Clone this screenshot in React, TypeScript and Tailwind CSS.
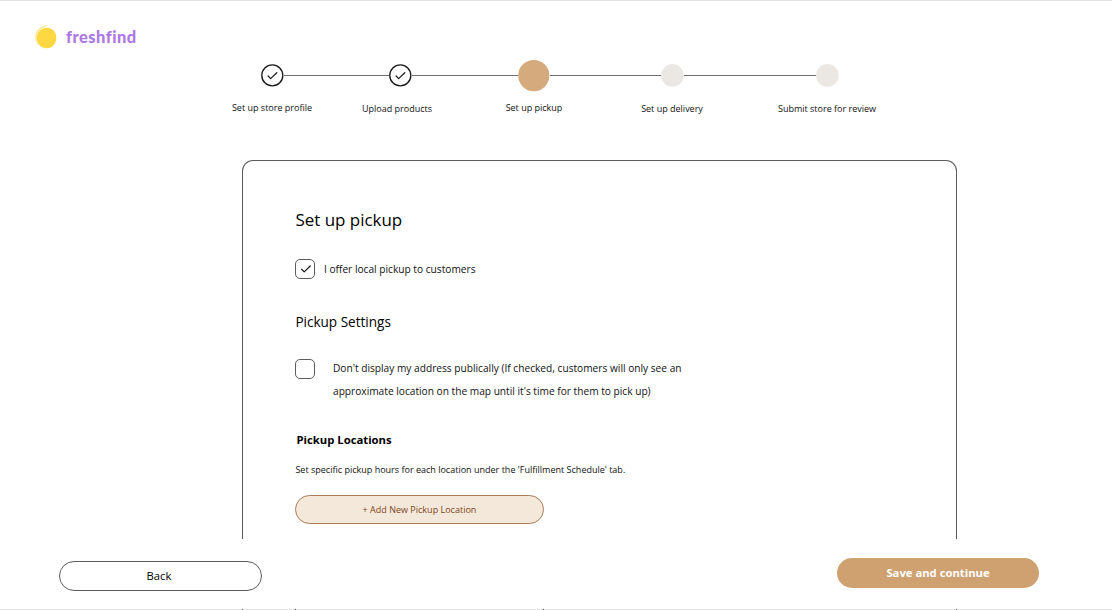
import type { ReactNode } from "react";

function Check({ className }: { className: string }) {
  return (
    <svg viewBox="0 0 12 10" className={className} fill="none" stroke="#1c1c1c" strokeWidth="1.25" strokeLinecap="round" strokeLinejoin="round">
      <path d="M1.6 5.3 4.2 7.9 10.2 2" />
    </svg>
  );
}

function Line({ className }: { className: string }) {
  return <div className={`h-px shrink-0 bg-[#6f6f6f] ${className}`} />;
}

function DoneStep() {
  return (
    <svg viewBox="0 0 23 23" className="size-[23px] shrink-0" fill="none" stroke="#1c1c1c" strokeLinecap="round" strokeLinejoin="round">
      <circle cx="11.3" cy="11.4" r="10.5" strokeWidth="1.35" />
      <path d="M7.1 12 9.7 14.6 15.8 8.7" strokeWidth="1.25" />
    </svg>
  );
}

function PendingStep() {
  return (
    <svg viewBox="0 0 23 23" className="size-[23px] shrink-0">
      <circle cx="11.4" cy="11.4" r="11.3" fill="#ebe8e3" />
    </svg>
  );
}

function Label({ className, children }: { className: string; children: ReactNode }) {
  return <div className={`flex shrink-0 justify-center whitespace-nowrap ${className}`}>{children}</div>;
}

function Logo() {
  return (
    <div className="flex h-[26px] items-center pl-[34px]">
      <svg viewBox="0 0 24 26" className="h-[26px] w-[24px] shrink-0" fill="none">
        <path d="M12.3 3.8C18 3.6 22.4 7.8 22.3 13.7 22.3 19.8 18.3 24.3 12.8 24.2 7 24.4 2.8 20 2.8 14.3 2.6 8.6 6.4 4.2 12.3 3.8Z" fill="#fed843" />
        <path d="M4 20C.2 14 .8 3.2 12.8 1.6M2.2 14C1.8 8.5 5.3 4 10.2 2.9" stroke="#fbdf74" strokeWidth="0.8" strokeLinecap="round" />
      </svg>
      <div className="ml-[8px] whitespace-nowrap font-['Lato',sans-serif] text-[16.5px] leading-[22px] font-black tracking-[0.48px] text-[#ad78e4] [font-variant-ligatures:none]">freshfind</div>
    </div>
  );
}

export default function App() {
  return (
    <div className="flex h-[610px] w-[1112px] flex-col overflow-hidden border-t border-[#e2e2e2] bg-white font-['Open_Sans',sans-serif] text-[#111111]">
      <header className="h-[58px] shrink-0 pt-[23px]">
        <Logo />
      </header>
      <nav className="flex h-[101px] shrink-0 flex-col">
        <div className="flex h-[33px] items-center pl-[261px]">
          <DoneStep />
          <Line className="w-[105px]" />
          <DoneStep />
          <Line className="w-[106px]" />
          <svg viewBox="0 0 32 32" className="size-[32px] shrink-0">
            <circle cx="15.8" cy="15.6" r="15.6" fill="#d5aa7c" />
          </svg>
          <Line className="w-[111px]" />
          <PendingStep />
          <Line className="w-[132px]" />
          <PendingStep />
        </div>
        <div className="mt-[9px] flex pl-[222px] text-[9px] leading-[14px]">
          <Label className="w-[100px]">Set up store profile</Label>
          <Label className="w-[150px] pt-[0.6px]">Upload products</Label>
          <Label className="w-[124px]">Set up pickup</Label>
          <Label className="w-[152px] pt-[0.6px]">Set up delivery</Label>
          <Label className="w-[158px] pt-[0.6px]">Submit store for review</Label>
        </div>
      </nav>
      <main className="ml-[242px] h-[379px] w-[715px] shrink-0 rounded-t-[11px] border border-b-0 border-[#5c5c5c] pl-[52px]">
        <h1 className="mt-[47px] ml-[0.4px] text-[16.95px] leading-[24px] text-black">Set up pickup</h1>
        <label className="mt-[27px] flex h-[20px] items-center">
          <span className="flex size-[20px] shrink-0 items-center justify-center rounded-[5px] border border-[#5c5c5c] pl-px">
            <Check className="h-[10px] w-[12px]" />
          </span>
          <span className="ml-[9px] text-[10.16px] leading-[16px]">I offer local pickup to customers</span>
        </label>
        <h2 className="mt-[33px] ml-[0.4px] text-[13.55px] leading-[20px] text-black">Pickup Settings</h2>
        <label className="mt-[25px] flex h-[48px]">
          <span className="mt-[2px] size-[20px] shrink-0 rounded-[5px] border border-[#5c5c5c]" />
          <span className="ml-[18px] whitespace-nowrap text-[10.16px] leading-[22.5px]">
            Don't display my address publically (If checked, customers will only see an
            <br />
            approximate location on the map until it's time for them to pick up)
          </span>
        </label>
        <h3 className="mt-[27px] ml-[1.4px] text-[11.3px] leading-[16px] font-bold text-black">Pickup Locations</h3>
        <p className="mt-[15px] ml-[0.4px] text-[9.02px] leading-[14px]">Set specific pickup hours for each location under the 'Fulfillment Schedule' tab.</p>
        <button className="mt-[18px] flex h-[29px] w-[249px] items-center justify-center rounded-full border border-[#ab7c59] bg-[#f4e8da] text-[9.02px] text-[#80461b]">
          + Add New Pickup Location
        </button>
      </main>
      <footer className="flex h-[70px] shrink-0 items-start justify-between pr-[73px] pl-[59px]">
        <button className="mt-[22px] flex h-[30px] w-[203px] items-center justify-center rounded-full border border-[#5c5c5c] pr-[3px] text-[11.25px] text-black">Back</button>
        <button className="mt-[19px] flex h-[30px] w-[202px] items-center justify-center rounded-full bg-[#cfa171] text-[11.28px] font-bold text-white">Save and continue</button>
      </footer>
      <div className="flex h-px shrink-0 bg-[#e2e2e2]">
        <div className="ml-[242px] h-px w-px bg-[#4c4c4c]" />
        <div className="ml-[52px] h-px w-px bg-[#4c4c4c]" />
        <div className="ml-[247px] h-px w-px bg-[#4c4c4c]" />
        <div className="ml-[412px] h-px w-px bg-[#4c4c4c]" />
      </div>
    </div>
  );
}
